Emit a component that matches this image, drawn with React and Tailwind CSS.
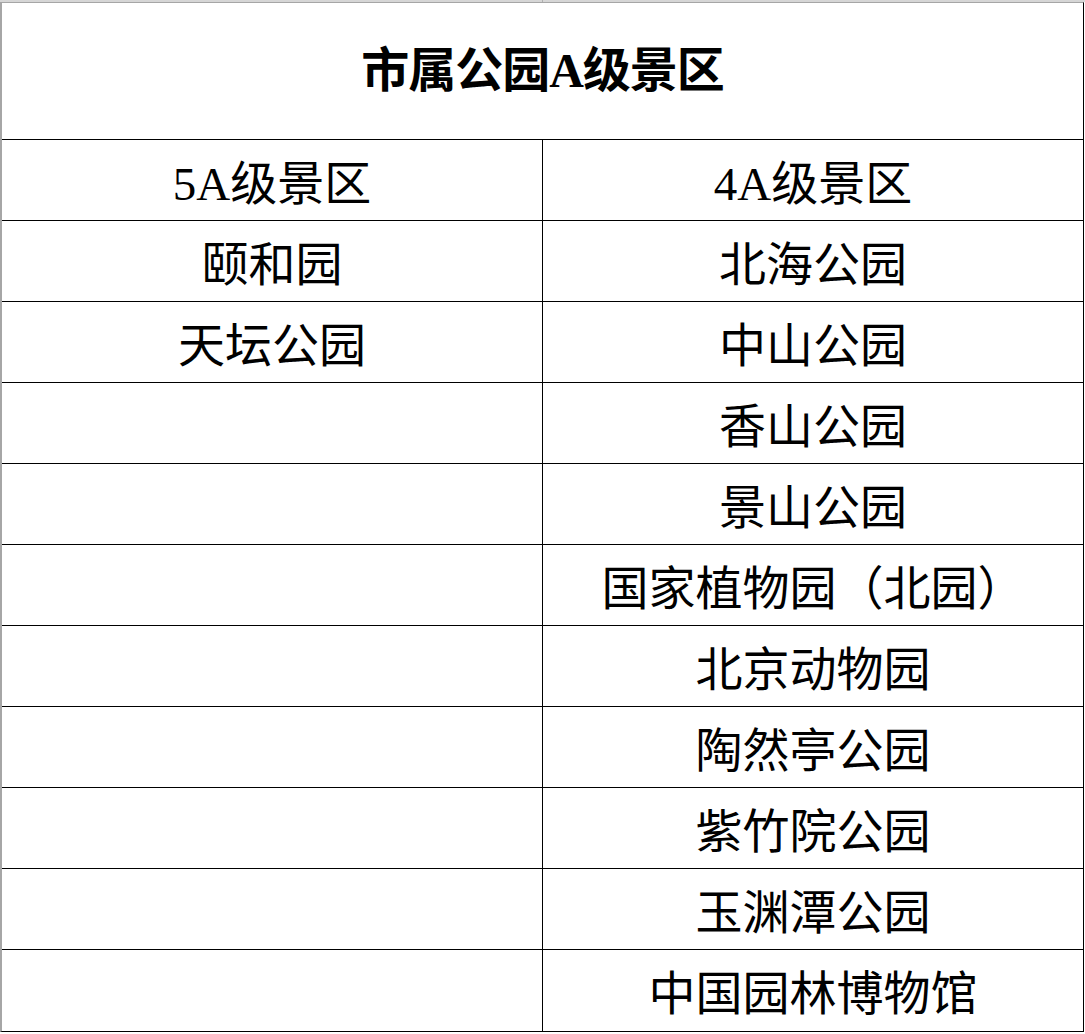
import React from "react";

const rows = [
  ["5A级景区", "4A级景区"],
  ["颐和园", "北海公园"],
  ["天坛公园", "中山公园"],
  ["", "香山公园"],
  ["", "景山公园"],
  ["", "国家植物园（北园）"],
  ["", "北京动物园"],
  ["", "陶然亭公园"],
  ["", "紫竹院公园"],
  ["", "玉渊潭公园"],
  ["", "中国园林博物馆"],
];

const font = {
  fontFamily: '"Liberation Serif", "Noto Sans CJK SC", serif',
};

export default function App() {
  return (
    <div className="w-[1085px] h-[1034px] bg-white text-black" style={font}>
      {/* grey strip above the sheet */}
      <div className="flex h-[2px] bg-[#d6d6d6]">
        <div className="w-[542px]" />
        <div className="w-px bg-[#b0b0b0]" />
      </div>
      <div className="w-[1084px] border-t border-t-[#a6a6a6] border-l-2 border-l-[#a6a6a6] border-r border-r-black border-b border-b-black">
        <div className="h-[137px] flex items-center justify-center border-b border-black">
          <h1 className="text-[48px] font-bold leading-none tracking-[-1px]">
            市属公园A级景区
          </h1>
        </div>
        {rows.map((r, i) => (
          <div
            key={i}
            className={`flex h-[81px] ${i < rows.length - 1 ? "border-b border-black" : "h-[80px]"}`}
          >
            <div className="w-[541px] pt-2 border-r border-black flex items-center justify-center text-[47px] leading-none">
              {r[0]}
            </div>
            <div className="w-[540px] pt-2 flex items-center justify-center text-[47px] leading-none">
              {r[1]}
            </div>
          </div>
        ))}
      </div>
    </div>
  );
}
